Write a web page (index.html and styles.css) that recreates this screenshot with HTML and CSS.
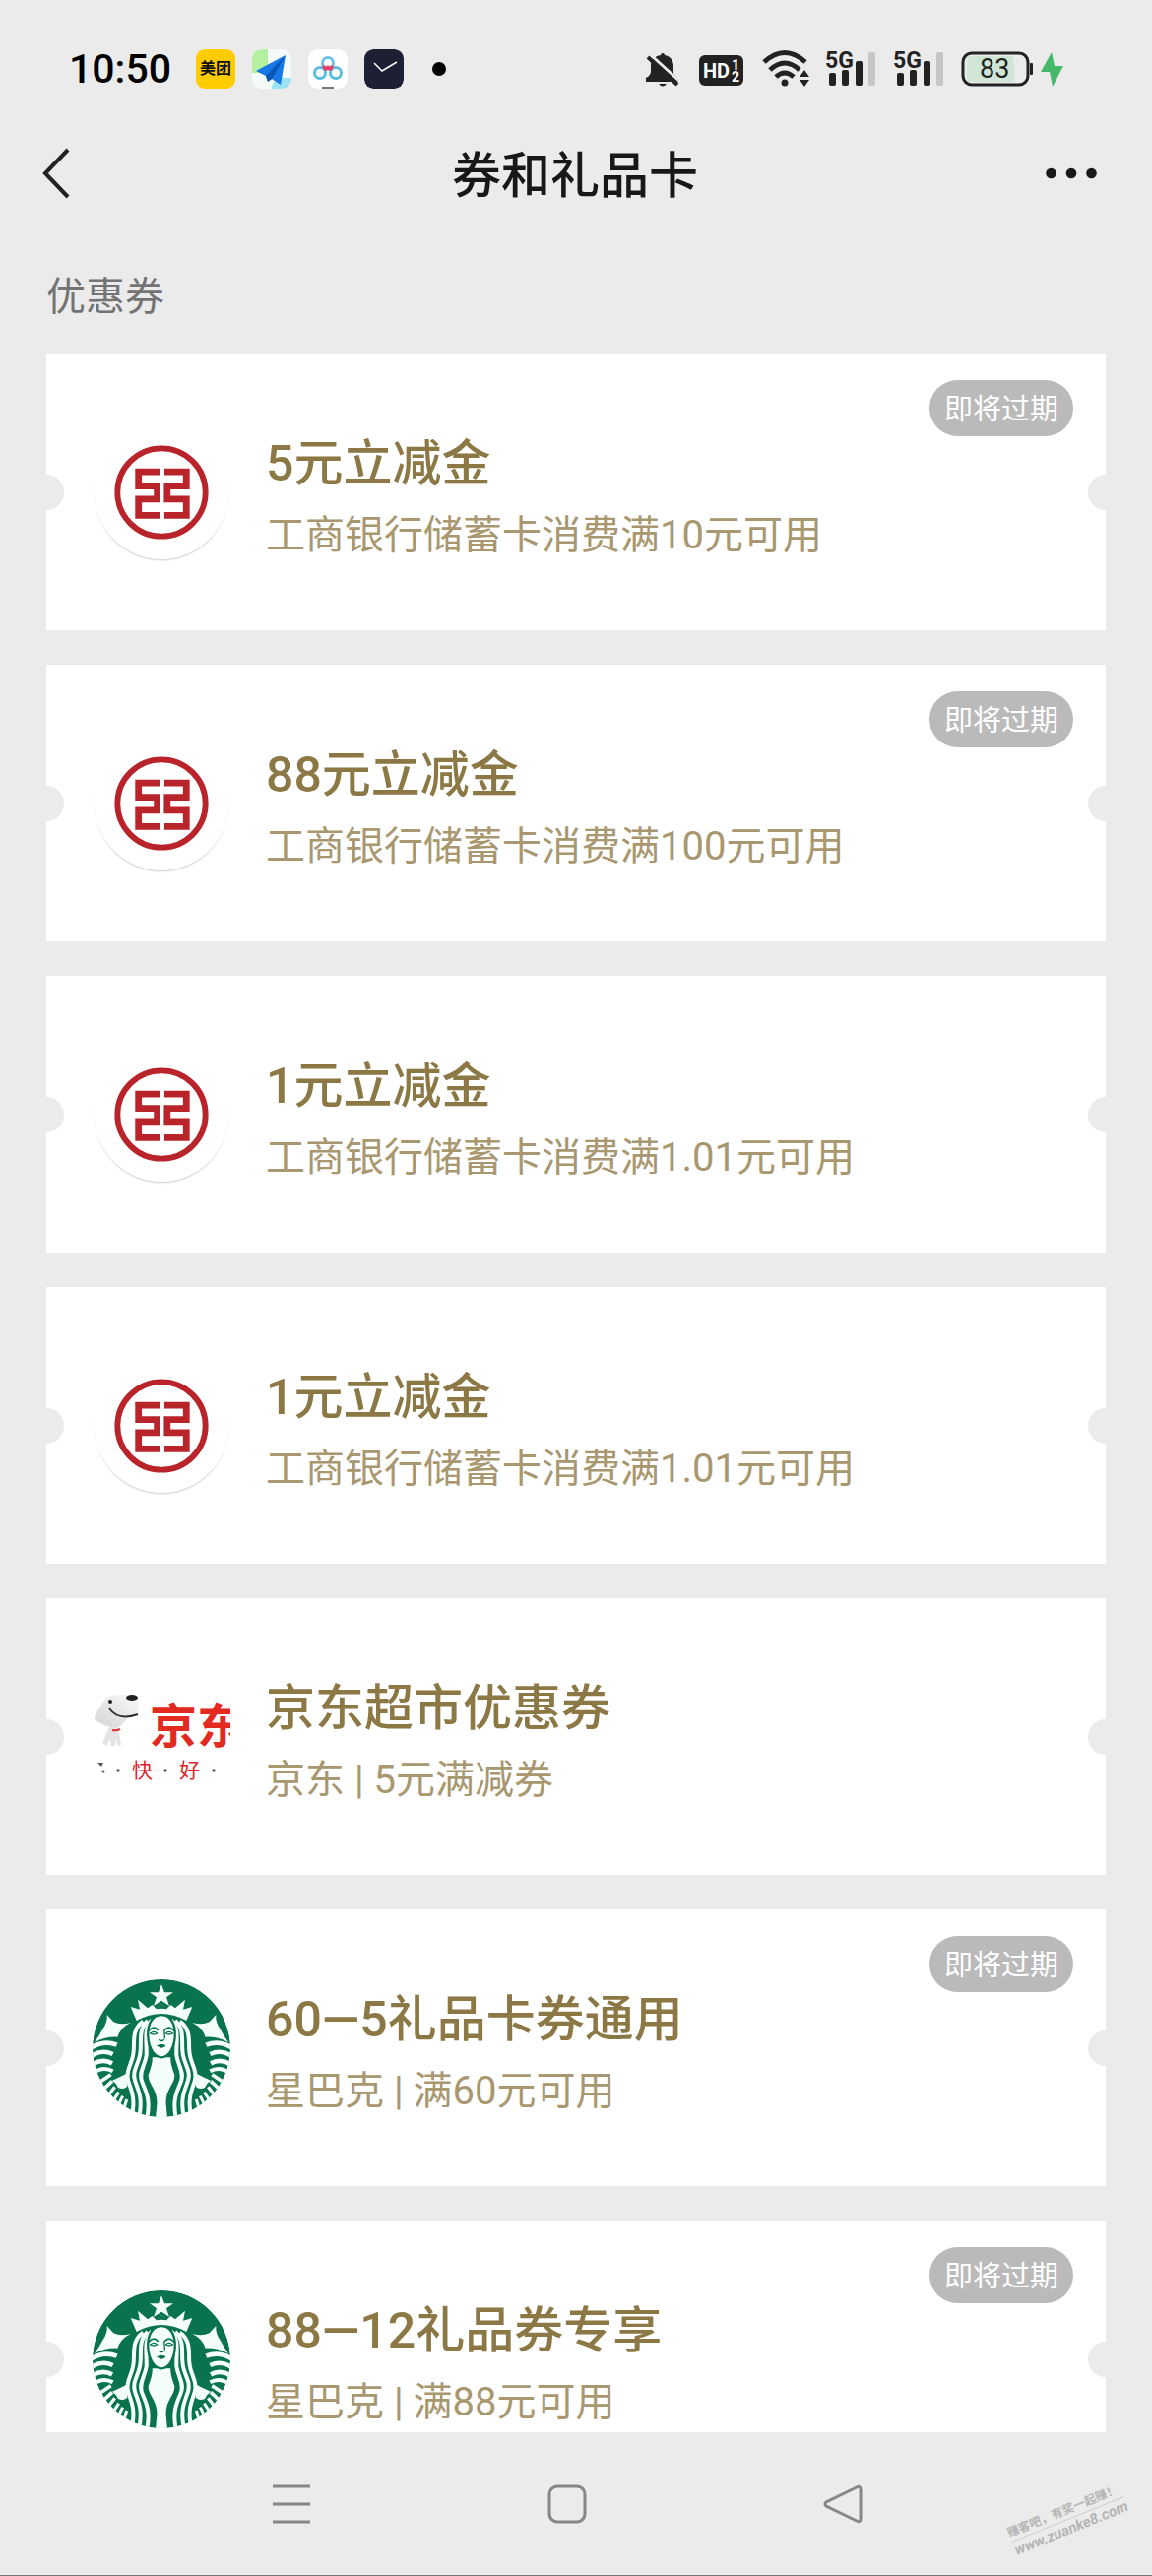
FILE: index.html
```html
<!DOCTYPE html>
<html lang="zh-CN">
<head>
    <meta charset="UTF-8">
    <meta name="viewport" content="width=device-width, initial-scale=1.0">
    <title>券和礼品卡</title>
    <link rel="stylesheet" href="styles.css">
</head>
<body>
    <!-- Shared logos -->
    <svg class="sprite" aria-hidden="true">
        <symbol id="icbc" viewBox="0 0 140 140">
            <circle cx="70" cy="70" r="46" fill="none" stroke="#b9242a" stroke-width="6"/>
            <path d="M69 48.500H46V63.500H65.500V77H46V94H69M73 48.500H96V63.500H76V77H96V94H73" fill="none" stroke="#b9242a" stroke-width="7"/>
        </symbol>
        <symbol id="starbucks" viewBox="44 58 420 420">
            <clipPath id="disc"><circle cx="254" cy="268" r="210"/></clipPath>
            <g clip-path="url(#disc)">
                <circle cx="254" cy="268" r="210" fill="#08734d"/>
                <g id="siren-half">
                    <path d="M88 166L108 188Q130 198 160 190Q128 206 120 234Q86 232 50 250Q66 228 76 208Q90 188 88 166Z" fill="#f4fffa"/>
                    <g fill="none" stroke="#f4fffa" stroke-width="14">
                        <path d="M40 266Q80 242 118 258"/>
                        <path d="M40 292Q72 270 106 286"/>
                        <path d="M42 318Q74 298 104 314"/>
                        <path d="M46 344Q76 322 106 338" stroke-width="12"/>
                        <path d="M62 374L100 348" stroke-width="11"/>
                        <path d="M76 394L104 368" stroke-width="11"/>
                        <path d="M90 414L112 386" stroke-width="10"/>
                        <path d="M106 430L124 402" stroke-width="9"/>
                        <path d="M120 446L136 414" stroke-width="9"/>
                        <path d="M138 458L148 424" stroke-width="9"/>
                    </g>
                    <path d="M104 366Q128 356 146 346L150 384Q138 396 122 388Q114 372 104 366Z" fill="#f4fffa"/>
                    <g fill="none" stroke="#f4fffa" stroke-width="12">
                        <path d="M198 186C160 214 174 252 168 286C164 318 144 334 152 364C160 396 176 416 164 472"/>
                        <path d="M212 184C180 214 196 252 188 290C182 320 164 338 173 366C182 396 198 416 186 476"/>
                        <path d="M224 182C198 210 210 252 208 290C204 320 184 340 194 368C204 396 222 420 210 480"/>
                    </g>
                </g>
                <use href="#siren-half" transform="translate(508 0) scale(-1 1)"/>
                <path d="M226 296Q228 312 214 350C212 376 244 396 240 440L236 480H272L268 440C264 396 296 376 294 350Q280 312 282 296Z" fill="#f4fffa"/>
                <path d="M254 166C194 166 204 294 254 296C304 294 314 166 254 166Z" fill="#f4fffa" stroke="#08734d" stroke-width="7"/>
                <path d="M178 184L160 142L188 150L182 120L212 146L226 136L238 148L254 134L270 148L282 136L296 146L326 120L320 150L348 142L330 184Q254 142 178 184Z" fill="#f4fffa"/>
                <path d="M236 149L254 134L272 149Q254 145 236 149Z" fill="#08734d"/>
                <path d="M254 74L263 98L290 98L269 113L278 139L254 123L230 139L239 113L218 98L245 98Z" fill="#f4fffa"/>
                <g fill="none" stroke="#08734d" stroke-width="5" stroke-linecap="round">
                    <path d="M216 214Q230 198 243 212M291 214Q278 198 265 212"/>
                    <path d="M220 223Q231 213 241 223Q230 229 220 223M288 223Q277 213 267 223Q278 229 288 223" stroke-width="4"/>
                    <path d="M262 214Q264 230 264 238M247 243Q254 248 261 243" stroke-width="4"/>
                    <path d="M242 260Q254 254 266 260Q254 272 242 260Z" fill="#08734d" stroke-width="3"/>
                </g>
            </g>
        </symbol>
    </svg>

    <div class="app">
        <div class="status-bar">
            <div class="status-left">
                <span class="time">10:50</span>
                <span class="app-icon meituan">美团</span>
                <svg class="app-icon" viewBox="0 0 40 40">
                    <rect width="40" height="40" rx="9" fill="#f5fafa"/>
                    <path d="M9 0H16V24H0V9A9 9 0 0 1 9 0Z" fill="#b4f0a0"/>
                    <path d="M20 40C20 33 26 28 34 29H40A10 10 0 0 1 30 40Z" fill="#9be4f8"/>
                    <path d="M34 6L4 22L14 27L16 33L20 30L29 36Z" fill="#1677e6"/>
                    <path d="M34 6L14 27L16 33L20 30Z" fill="#0b55b5"/>
                </svg>
                <svg class="app-icon" viewBox="0 0 40 40">
                    <rect width="40" height="40" rx="9" fill="#fff"/>
                    <g fill="none" stroke-width="3">
                        <circle cx="20" cy="14" r="5.5" stroke="#6cc0e4"/>
                        <circle cx="12" cy="24" r="5.5" stroke="#58bddf"/>
                        <circle cx="28" cy="24" r="5.5" stroke="#58bddf"/>
                        <path d="M15 17Q20 23 25 17M16 21L20 18L24 21" stroke="#e6416b"/>
                    </g>
                    <path d="M14 39H26" stroke="#777" stroke-width="2"/>
                </svg>
                <svg class="app-icon" viewBox="0 0 40 40">
                    <rect width="40" height="40" rx="9" fill="#1d1f33"/>
                    <path d="M10 14L18 22L33 13" fill="none" stroke="#fff" stroke-width="1.5"/>
                </svg>
                <span class="more-dot"></span>
            </div>
            <div class="status-right">
                <svg width="38" height="44" viewBox="0 3 38 44">
                    <path d="M15 11A2 2 0 0 1 19 11C25 12 28 17 28 22V30L34 36V38H0V34Q5 32 5 27V21C5 16 9 12 15 11Z" fill="#222"/>
                    <path d="M13 40H21Q17 45 13 40Z" fill="#222"/>
                    <path d="M4 10L36 39" stroke="#ebebeb" stroke-width="3"/>
                    <path d="M2 13L32 41" stroke="#222" stroke-width="4"/>
                </svg>
                <svg width="48" height="44" viewBox="0 3 48 44">
                    <rect x="0" y="11" width="45" height="31" rx="6" fill="#222"/>
                    <text x="4" y="34" class="hd-text">HD</text>
                    <text x="33" y="26" class="hd-small">1</text>
                    <text x="33" y="38" class="hd-small">2</text>
                </svg>
                <svg width="48" height="44" viewBox="0 3 48 44">
                    <g fill="none" stroke="#222" stroke-width="5">
                        <path d="M2 18Q23 -1 44 18"/>
                        <path d="M8 26Q23 12 38 26"/>
                        <path d="M14 33Q23 25 32 33"/>
                    </g>
                    <circle cx="23" cy="39" r="3.5" fill="#222"/>
                    <path d="M43 26L48 33H38ZM43 43L48 36H38Z" fill="#222"/>
                </svg>
                <svg width="53" height="44" viewBox="0 3 53 44" fill="#222">
                    <text x="0" y="24" class="signal-text">5G</text>
                    <rect x="4" y="29" width="7" height="13" rx="2"/>
                    <rect x="17" y="26" width="7" height="16" rx="2"/>
                    <rect x="31" y="17" width="7" height="25" rx="2"/>
                    <rect x="44" y="8" width="7" height="34" rx="2" fill="#c6c6c6"/>
                </svg>
                <svg width="53" height="44" viewBox="0 3 53 44" fill="#222">
                    <text x="0" y="24" class="signal-text">5G</text>
                    <rect x="4" y="29" width="7" height="13" rx="2"/>
                    <rect x="17" y="26" width="7" height="16" rx="2"/>
                    <rect x="31" y="17" width="7" height="25" rx="2"/>
                    <rect x="44" y="8" width="7" height="34" rx="2" fill="#c6c6c6"/>
                </svg>
                <svg width="104" height="44" viewBox="0 3 104 44">
                    <rect x="6" y="12" width="48" height="26" rx="3" fill="#cfe6d6"/>
                    <rect x="2" y="9" width="66" height="32" rx="9" fill="none" stroke="#222" stroke-width="3"/>
                    <rect x="70" y="19" width="3" height="12" rx="1" fill="#222"/>
                    <text x="19" y="34" class="battery-text">83</text>
                    <path d="M92 8L81 28H90L93 43L104 22H95Z" fill="#45b86a"/>
                </svg>
            </div>
        </div>

        <header class="nav-header">
            <button class="icon-button back" aria-label="返回">
                <svg width="30" height="52" viewBox="0 0 30 52"><path d="M27 2L4 26L27 50" fill="none" stroke="#222" stroke-width="4"/></svg>
            </button>
            <h1>券和礼品卡</h1>
            <button class="icon-button" aria-label="更多">
                <svg width="52" height="12" viewBox="0 0 52 12" fill="#181818"><circle cx="5.5" cy="6" r="5.3"/><circle cx="26" cy="6" r="5.3"/><circle cx="46.5" cy="6" r="5.3"/></svg>
            </button>
        </header>

        <main>
            <h2>优惠券</h2>
            <div class="coupon-list">
                <a class="coupon" href="#">
                    <svg class="logo round"><use href="#icbc"/></svg>
                    <div class="info">
                        <h3>5元立减金</h3>
                        <p>工商银行储蓄卡消费满10元可用</p>
                    </div>
                    <span class="badge">即将过期</span>
                </a>
                <a class="coupon" href="#">
                    <svg class="logo round"><use href="#icbc"/></svg>
                    <div class="info">
                        <h3>88元立减金</h3>
                        <p>工商银行储蓄卡消费满100元可用</p>
                    </div>
                    <span class="badge">即将过期</span>
                </a>
                <a class="coupon" href="#">
                    <svg class="logo round"><use href="#icbc"/></svg>
                    <div class="info">
                        <h3>1元立减金</h3>
                        <p>工商银行储蓄卡消费满1.01元可用</p>
                    </div>
                </a>
                <a class="coupon" href="#">
                    <svg class="logo round"><use href="#icbc"/></svg>
                    <div class="info">
                        <h3>1元立减金</h3>
                        <p>工商银行储蓄卡消费满1.01元可用</p>
                    </div>
                </a>
                <a class="coupon" href="#">
                    <svg class="logo" viewBox="0 0 140 140">
                        <defs>
                            <linearGradient id="dog" x1="0" y1="1" x2="1" y2="0">
                                <stop offset="0" stop-color="#d4d4d4"/>
                                <stop offset="1" stop-color="#fafafa"/>
                            </linearGradient>
                        </defs>
                        <path d="M8 40Q12 28 24 27L42 27Q48 29 47 40Q45 48 36 50Q30 60 24 61Q12 60 2 52Q2 46 8 40Z" fill="url(#dog)"/>
                        <path d="M17 60L10 76L14 79L18 73L19 79H23L24 72L26 79L29 78L26 60Z" fill="#e4e4e4"/>
                        <path d="M20 63Q24 64 28 62" fill="none" stroke="#d33" stroke-width="2"/>
                        <ellipse cx="40" cy="30" rx="6" ry="3" fill="#222"/>
                        <circle cx="18" cy="34" r="2" fill="#222"/>
                        <path d="M17 41Q26 54 46 47" fill="none" stroke="#333" stroke-width="2"/>
                        <text x="58" y="76" class="jd-name">京东</text>
                        <text x="40" y="111" class="jd-slogan">快</text>
                        <text x="88" y="111" class="jd-slogan">好</text>
                        <g fill="#555"><circle cx="26" cy="104" r="1.7"/><circle cx="74" cy="104" r="1.7"/><circle cx="123" cy="104" r="1.7"/><circle cx="11" cy="105" r="1.5"/><path d="M5 96H11L9 100Z"/></g>
                    </svg>
                    <div class="info">
                        <h3>京东超市优惠券</h3>
                        <p>京东 | 5元满减券</p>
                    </div>
                </a>
                <a class="coupon" href="#">
                    <svg class="logo"><use href="#starbucks"/></svg>
                    <div class="info">
                        <h3>60—5礼品卡券通用</h3>
                        <p>星巴克 | 满60元可用</p>
                    </div>
                    <span class="badge">即将过期</span>
                </a>
                <a class="coupon" href="#">
                    <svg class="logo"><use href="#starbucks"/></svg>
                    <div class="info">
                        <h3>88—12礼品券专享</h3>
                        <p>星巴克 | 满88元可用</p>
                    </div>
                    <span class="badge">即将过期</span>
                </a>
            </div>
        </main>

        <nav class="system-nav">
            <button class="icon-button" aria-label="最近任务">
                <svg width="40" height="40" viewBox="0 0 40 40"><path d="M1 2H39M1 20H39M1 38H39" stroke="#868686" stroke-width="3"/></svg>
            </button>
            <button class="icon-button" aria-label="主屏幕">
                <svg width="40" height="40" viewBox="0 0 40 40"><rect x="2" y="2" width="36" height="36" rx="8" fill="none" stroke="#868686" stroke-width="3"/></svg>
            </button>
            <button class="icon-button" aria-label="返回上一级">
                <svg width="40" height="40" viewBox="0 0 40 40"><path d="M34 3Q38 1 38 5V35Q38 39 34 37L3 22Q1 20 3 18Z" fill="none" stroke="#868686" stroke-width="3"/></svg>
            </button>
        </nav>

        <div class="watermark">
            <span class="watermark-cn">赚客吧，有奖一起赚！</span>
            <span class="watermark-url">www.zuanke8.com</span>
        </div>
    </div>
</body>
</html>
```

FILE: styles.css
```css
* {
    box-sizing: border-box;
}

body {
    margin: 0;
    background-color: #ebebeb;
    color: #181818;
    font-family: Roboto, "Noto Sans CJK SC", sans-serif;
}

h1, h2, h3, p {
    margin: 0;
}

svg {
    display: block;
}

.sprite {
    position: absolute;
    width: 0;
    height: 0;
}

.app {
    position: relative;
    display: flex;
    flex-direction: column;
    height: 100vh;
    overflow: hidden;
    border-bottom: 1px solid #777;
}

/* Status bar */
.status-bar {
    display: flex;
    justify-content: space-between;
    align-items: center;
    padding: 46px 90px 32px 70px;
}

.status-left,
.status-right {
    display: flex;
    align-items: center;
}

.status-left {
    gap: 17px;
}

.status-right {
    gap: 16px;
}

.time {
    margin-right: 8px;
    font-size: 41px;
    line-height: 48px;
    font-weight: 500;
    color: #000;
}

.app-icon {
    width: 40px;
    height: 40px;
    border-radius: 9px;
}

.meituan {
    background-color: #fc0;
    color: #111;
    font-size: 16px;
    font-weight: 700;
    line-height: 40px;
    text-align: center;
}

.more-dot {
    width: 14px;
    height: 14px;
    margin-left: 12px;
    border-radius: 50%;
    background-color: #000;
}

.signal-text {
    font-size: 23px;
    font-weight: 700;
}

.hd-text {
    font-size: 20px;
    font-weight: 700;
    fill: #fff;
}

.hd-small {
    font-size: 14px;
    font-weight: 700;
    fill: #fff;
}

.battery-text {
    font-size: 27px;
    fill: #222;
}

/* Header */
.nav-header {
    display: flex;
    justify-content: space-between;
    align-items: center;
    height: 100px;
    padding: 0 56px 0 42px;
}

.back {
    width: 64px;
}

h1 {
    padding-top: 6px;
    font-size: 50px;
    font-weight: 500;
    line-height: 70px;
}

.icon-button {
    padding: 0;
    border: none;
    background: none;
    cursor: pointer;
}

/* Coupons */
main {
    flex: 1;
    min-height: 0;
    padding: 48px 47px 0;
    overflow: hidden;
}

h2 {
    margin-bottom: 29px;
    font-size: 40px;
    font-weight: 400;
    line-height: 56px;
    color: #737373;
}

.coupon-list {
    display: flex;
    flex-direction: column;
    gap: 35px;
}

.coupon {
    position: relative;
    display: flex;
    align-items: center;
    gap: 36px;
    height: 281px;
    padding: 0 47px;
    background-color: #fff;
    text-decoration: none;
    overflow: hidden;
}

/* Ticket notches */
.coupon::before,
.coupon::after {
    content: "";
    position: absolute;
    top: 50%;
    width: 36px;
    height: 36px;
    margin-top: -18px;
    border-radius: 50%;
    background-color: #ebebeb;
}

.coupon::before {
    left: -18px;
}

.coupon::after {
    right: -18px;
}

.logo {
    width: 140px;
    height: 140px;
    flex-shrink: 0;
}

.round {
    width: 136px;
    height: 136px;
    margin: 0 2px;
    border-radius: 50%;
    box-shadow: 0 2px 2px -1px #ccc;
}

.info {
    display: flex;
    flex-direction: column;
    gap: 14px;
    padding-top: 4px;
    white-space: nowrap;
}

h3 {
    font-size: 50px;
    font-weight: 500;
    line-height: 70px;
    color: #8c7845;
}

.coupon p {
    font-size: 40px;
    line-height: 48px;
    color: #a8976f;
}

.badge {
    position: absolute;
    top: 27px;
    right: 33px;
    padding: 3px 15px 0;
    border-radius: 29px;
    background-color: #bababa;
    color: #fff;
    font-size: 29px;
    line-height: 54px;
}

.jd-name {
    font-size: 48px;
    font-weight: 700;
    fill: #e32a20;
}

.jd-slogan {
    font-size: 21px;
    fill: #d8232a;
}

/* System navigation */
.system-nav {
    display: flex;
    justify-content: center;
    align-items: center;
    gap: 240px;
    height: 145px;
    padding-right: 18px;
}

.watermark {
    position: absolute;
    right: 24px;
    bottom: 38px;
    display: flex;
    flex-direction: column;
    color: #b5b5b5;
    font-weight: 700;
    transform: rotate(-22deg);
}

.watermark-cn {
    border-bottom: 1px solid #ccc;
    font-size: 12px;
    line-height: 17px;
}

.watermark-url {
    font-size: 15px;
    font-style: italic;
    line-height: 18px;
}
```
